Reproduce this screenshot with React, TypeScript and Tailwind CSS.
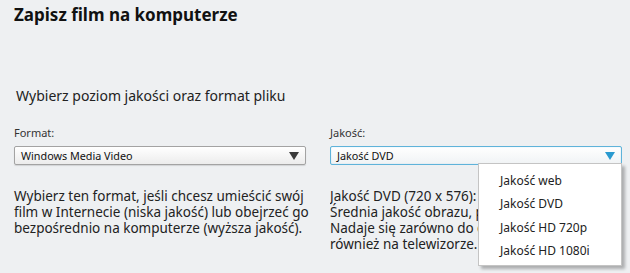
import React from "react";

const qualities = ["Jakość web", "Jakość DVD", "Jakość HD 720p", "Jakość HD 1080i"];

function Caret({ blue }: { blue?: boolean }) {
  return (
    <svg width="10" height="8" viewBox="0 0 10 8" className="shrink-0">
      <path d="M0 0 H10 L5 8 Z" fill={blue ? "#2a9ad0" : "#3a3a3a"} />
    </svg>
  );
}

export default function App() {
  return (
    <div
      className="w-[630px] h-[273px] overflow-hidden bg-[#eef0f2] text-[#1e1e1e] pl-[14px] pr-[8px]"
      style={{ fontFamily: '"Noto Sans", "Open Sans", sans-serif' }}
    >
      {/* Header */}
      <h1 className="pt-[3px] text-[17px] leading-[24px] font-bold text-[#111]">
        Zapisz film na komputerze
      </h1>
      <p className="mt-[59px] pl-[2px] text-[14px] leading-[20px] text-[#222]">
        Wybierz poziom jakości oraz format pliku
      </p>

      <div className="mt-[20px] flex gap-[24px]">
        {/* Format column */}
        <div className="w-[292px]">
          <div className="text-[11px] leading-[14px] text-[#333]">Format:</div>
          <div className="mt-[6px] h-[19px] flex items-center justify-between rounded-[2px] border border-[#a3a3a3] bg-gradient-to-b from-white to-[#ececec] pl-[6px] pr-[6px] shadow-[0_1px_1px_rgba(0,0,0,0.12)]">
            <span className="text-[10.8px] leading-[14px] text-[#111]">Windows Media Video</span>
            <Caret />
          </div>
          <p className="mt-[23px] text-[13.5px] leading-[16px] text-[#222] whitespace-nowrap">
            Wybierz ten format, jeśli chcesz umieścić swój
            <br />
            film w Internecie (niska jakość) lub obejrzeć go
            <br />
            bezpośrednio na komputerze (wyższa jakość).
          </p>
        </div>

        {/* Quality column */}
        <div className="w-[292px] relative">
          <div className="text-[11px] leading-[14px] text-[#333]">Jakość:</div>
          <div className="mt-[6px] h-[19px] flex items-center justify-between rounded-[2px] border border-[#5fb3da] bg-gradient-to-b from-white to-[#f0f3f5] pl-[6px] pr-[6px] shadow-[inset_0_0_1px_rgba(95,179,218,0.6)]">
            <span className="text-[10.8px] leading-[14px] text-[#111]">Jakość DVD</span>
            <Caret blue />
          </div>
          {/* description runs on behind the open menu */}
          <p className="mt-[23px] w-[148px] overflow-hidden text-[13.5px] leading-[16px] text-[#222] whitespace-nowrap">
            Jakość DVD (720 x 576):
            <br />
            Średnia jakość obrazu, plik
            <br />
            Nadaje się zarówno do o
            <br />
            również na telewizorze.
          </p>

          {/* Open dropdown menu */}
          <ul className="absolute left-[148px] top-[37px] w-[144px] bg-white border border-[#c4c4c4] shadow-[3px_3px_3px_rgba(0,0,0,0.28)] pt-[5px] pb-[2px]">
            {qualities.map((q) => (
              <li key={q} className="h-[23.5px] flex items-center pl-[21px] text-[12px] text-[#222]">
                {q}
              </li>
            ))}
          </ul>
        </div>
      </div>
    </div>
  );
}
